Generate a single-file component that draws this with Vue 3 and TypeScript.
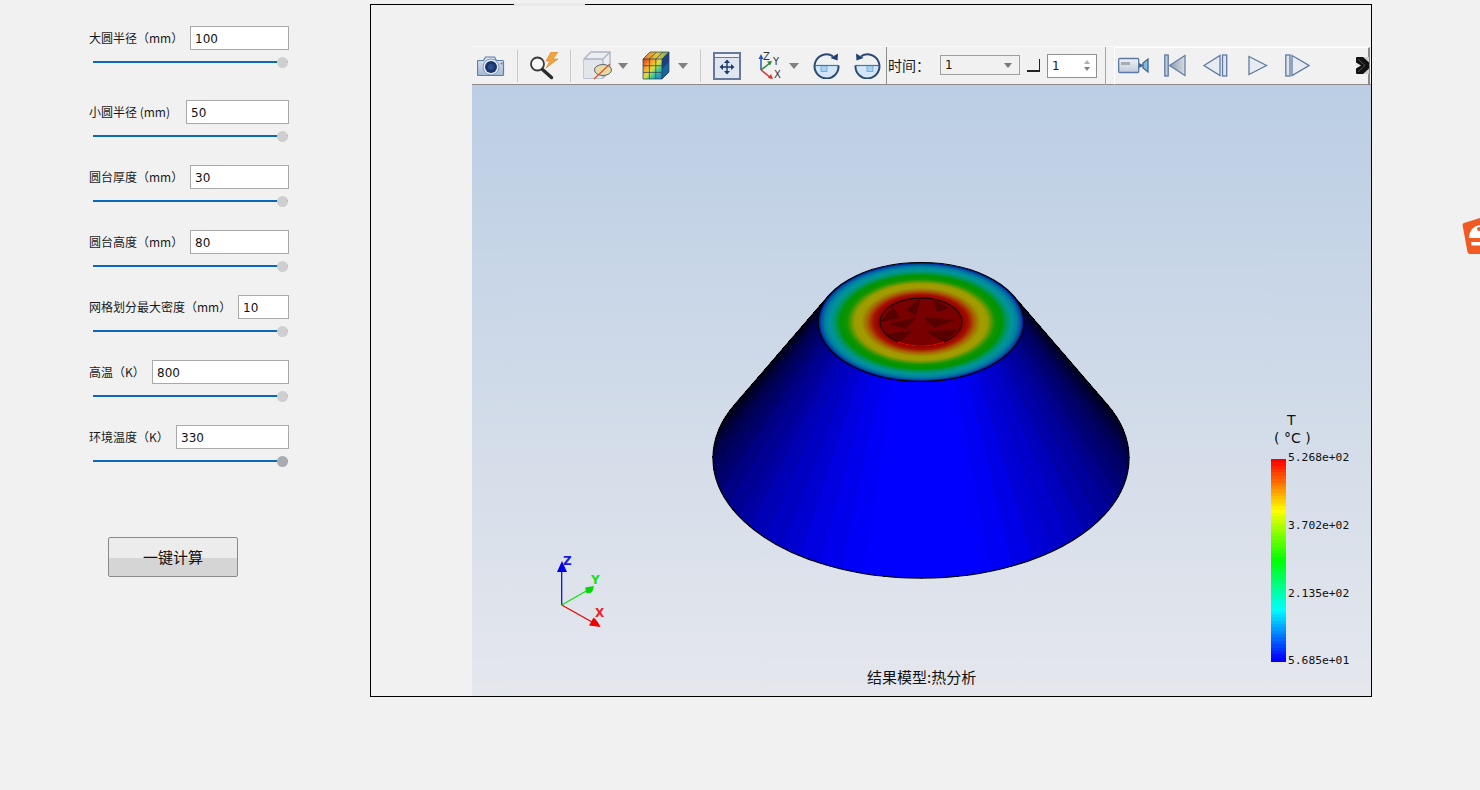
<script setup lang="ts">
import { reactive } from 'vue'

interface Param {
  label: string
  value: string
  inputWidth: number
}

const params = reactive<Param[]>([
  { label: '大圆半径（mm）', value: '100', inputWidth: 99 },
  { label: '小圆半径 (mm)', value: '50', inputWidth: 103 },
  { label: '圆台厚度（mm）', value: '30', inputWidth: 99 },
  { label: '圆台高度（mm）', value: '80', inputWidth: 99 },
  { label: '网格划分最大密度（mm）', value: '10', inputWidth: 51 },
  { label: '高温（K）', value: '800', inputWidth: 137 },
  { label: '环境温度（K）', value: '330', inputWidth: 113 },
])

// cone side, split in facets and shaded by angle from the viewer
const facetJitter = [0, -5, 3, -2, 4, -4]
const facets: { points: string; fill: string }[] = []
const facetCount = 72
const startDeg = -26.5
const endDeg = 206.5
for (let i = 0; i < facetCount; i++) {
  const a0 = ((startDeg + ((endDeg - startDeg) * i) / facetCount) * Math.PI) / 180
  const a1 = ((startDeg + ((endDeg - startDeg) * (i + 1)) / facetCount) * Math.PI) / 180
  const mid = startDeg + ((endDeg - startDeg) * (i + 0.5)) / facetCount
  const u = Math.abs(mid - 90) / 116.5
  const b = Math.max(0.1, Math.min(1, 1.08 * (1 - Math.pow(u, 1.3))))
  const blue = Math.max(0, Math.min(255, Math.round(b * 255 + facetJitter[i % 6] * (u > 0.15 ? 1 : 0))))
  const pt = (rx: number, ry: number, cy: number, a: number) =>
    `${(921 + rx * Math.cos(a)).toFixed(1)},${(cy + ry * Math.sin(a)).toFixed(1)}`
  facets.push({
    points: [pt(103, 59.5, 322, a0), pt(103, 59.5, 322, a1), pt(208, 120, 458, a1), pt(208, 120, 458, a0)].join(' '),
    fill: `rgb(0,0,${blue})`,
  })
}

function jet(t: number): string {
  const stops = [
    [0, 0, 255],
    [0, 255, 255],
    [0, 255, 0],
    [255, 255, 0],
    [255, 0, 0],
  ]
  const p = Math.min(3.999, t * 4)
  const k = Math.floor(p)
  const f = p - k
  const c = stops[k].map((v, n) => Math.round(v + (stops[k + 1][n] - v) * f))
  return `rgb(${c.join(',')})`
}

const bandCount = 60
const bands = Array.from({ length: bandCount }, (_, i) => ({
  y: 459 + (202 * i) / bandCount,
  h: 202 / bandCount + 0.5,
  fill: jet(1 - i / (bandCount - 1)),
}))

const legend = [
  { y: 461, text: '5.268e+02' },
  { y: 529, text: '3.702e+02' },
  { y: 597, text: '2.135e+02' },
  { y: 664, text: '5.685e+01' },
]

const holeDark = [
  '880,322 893,307 900,318',
  '906,310 921,298 916,315',
  '933,300 950,308 937,312',
  '888,324 917,317 906,329',
  '923,317 955,320 934,328',
  '884,334 913,330 900,342',
  '926,331 958,330 943,342',
]
</script>

<template>
  <div class="page">
    <aside class="panel">
      <div v-for="(p, i) in params" :key="p.label" class="param">
        <div class="field">
          <label class="label">{{ p.label }}</label>
          <input v-model="p.value" class="num" type="text" :style="{ width: p.inputWidth + 'px' }" />
        </div>
        <input class="slider" :class="{ active: i === params.length - 1 }" type="range" min="0" max="100" value="100" />
      </div>
      <button class="run" type="button">一键计算</button>
    </aside>

    <main class="frame">
      <div class="tab"></div>
      <div class="toolbar">
        <svg class="t-camera" width="28" height="22" viewBox="0 0 28 22">
          <defs>
            <linearGradient id="camBody" x1="0" y1="0" x2="0" y2="1">
              <stop offset="0" stop-color="#dfe7f2" />
              <stop offset="1" stop-color="#a3b9d8" />
            </linearGradient>
          </defs>
          <path d="M1.500 5.500h5l2-3.500h9l2 3.500h6a1 1 0 0 1 1 1v13a1 1 0 0 1-1 1h-24a1 1 0 0 1-1-1v-13a1 1 0 0 1 1-1z" fill="url(#camBody)" stroke="#5f7da5" stroke-width="1.200" />
          <circle cx="14" cy="12" r="8" fill="#e6ecf5" stroke="#7d97b9" />
          <circle cx="14" cy="12" r="6" fill="#1a3668" />
          <circle cx="14" cy="12" r="3" fill="#2a4f8f" />
          <circle cx="24.500" cy="8.500" r="1" fill="#5b7aa3" />
        </svg>
        <i class="sep s-a"></i>
        <svg class="t-search" width="29" height="28" viewBox="0 0 29 28">
          <polygon points="21,0 16,9 20,9 16,16 28,7 23,7 28,0" fill="#f0a43a" stroke="#d9822b" stroke-width=".6" />
          <circle cx="7.500" cy="12" r="6.500" fill="#f4f6f8" stroke="#3a3a3a" stroke-width="1.800" />
          <path d="M12.500 17.500l9 8" stroke="#2c2c2c" stroke-width="3.400" stroke-linecap="round" />
        </svg>
        <i class="sep s-b"></i>
        <svg class="t-cube" width="29" height="29" viewBox="0 0 29 29">
          <path d="M1 8l7-7h19v19l-7 7H1z" fill="#eceef2" stroke="#aab4c2" stroke-width="1.300" />
          <path d="M1 8h19v19H1z" fill="#e2e5ea" />
          <path d="M1 8h19v19M20 8l7-7" fill="none" stroke="#aab4c2" stroke-width="1.300" />
          <ellipse cx="20" cy="19" rx="8.500" ry="5.500" fill="#ead9a2" stroke="#5d6675" />
          <path d="M11 28L27 13" stroke="#d2582c" stroke-width="1.300" />
        </svg>
        <i class="caret c-a"></i>
        <svg class="t-grid" width="28" height="29" viewBox="0 0 28 29">
          <defs>
            <linearGradient id="rainbow" x1="0" y1="0" x2="1" y2="1">
              <stop offset="0" stop-color="#e02a20" />
              <stop offset=".3" stop-color="#f4a62a" />
              <stop offset=".5" stop-color="#dbe040" />
              <stop offset=".7" stop-color="#36c59a" />
              <stop offset="1" stop-color="#1f6fe0" />
            </linearGradient>
            <linearGradient id="rainbowTop" x1="0" y1="0" x2="1" y2="0">
              <stop offset="0" stop-color="#e8762c" />
              <stop offset=".55" stop-color="#e0c83a" />
              <stop offset="1" stop-color="#5fae58" />
            </linearGradient>
          </defs>
          <polygon points="1,8 8,1 27,1 20,8" fill="url(#rainbowTop)" />
          <polygon points="20,8 27,1 27,21 20,28" fill="#1d3f86" />
          <polygon points="20,18 27,11 27,21 20,28" fill="#17689a" />
          <rect x="1" y="8" width="19" height="20" fill="url(#rainbow)" />
          <path d="M1 8h19v20H1zM7.400 8v20M13.800 8v20M1 14.700h19M1 21.400h19M20 8l7-7M1 8l7-7h19v20l-7 7M7.400 8l7-7M13.800 8l7-7" fill="none" stroke="#2a3650" stroke-width=".7" />
        </svg>
        <i class="caret c-b"></i>
        <i class="sep s-c"></i>
        <svg class="t-fit" width="28" height="28" viewBox="0 0 28 28">
          <rect x="1" y="1" width="26" height="26" fill="#dfe6f0" stroke="#66799c" stroke-width="2" />
          <rect x="2" y="2" width="24" height="3" fill="#eef2f7" />
          <path d="M2 5.500h24" stroke="#66799c" />
          <path d="M14 9.500v11M8.500 15h11" stroke="#1e3a66" stroke-width="1.400" />
          <path d="M14 7.500l-3 3.500h6zM14 22.500l-3-3.500h6zM6.500 15l3.500-3v6zM21.500 15l-3.500-3v6z" fill="#1e3a66" />
        </svg>
        <svg class="t-axes" width="24" height="29" viewBox="0 0 24 29">
          <path d="M3 19V6" stroke="#2a56b0" stroke-width="1.500" />
          <path d="M3 19l9-7" stroke="#2b8a3e" stroke-width="1.500" />
          <path d="M3 19l10 8" stroke="#d8332a" stroke-width="1.500" />
          <path d="M3 3L.5 8h5z" fill="#2a56b0" />
          <path d="M14 10l-5 .5 3 4z" fill="#2b8a3e" />
          <path d="M15 28l-5-1 3-4z" fill="#d8332a" />
          <text class="axis-tag" x="5" y="9">Z</text>
          <text class="axis-tag" x="15" y="14">Y</text>
          <text class="axis-tag" x="16" y="27">X</text>
        </svg>
        <i class="caret c-c"></i>
        <svg class="t-rot1" width="27" height="27" viewBox="0 0 27 27">
          <path d="M1.500 13.500a12 12 0 0 0 24 0z" fill="#d3e6f6" />
          <rect x="8" y="13.500" width="6" height="6" fill="#a8d0f0" stroke="#5d9ad0" stroke-width=".7" />
          <path d="M1.500 13.500h24" stroke="#2a7fc4" stroke-width="1.200" />
          <path d="M20 4.300A12 12 0 1 0 25.500 13.500" fill="none" stroke="#2c4a72" stroke-width="2" />
          <path d="M25 1.500l-.5 7-7-2.500z" fill="#1f3f70" />
        </svg>
        <svg class="t-rot2" width="27" height="27" viewBox="0 0 27 27">
          <g transform="translate(27 0) scale(-1 1)">
            <path d="M1.500 13.500a12 12 0 0 0 24 0z" fill="#d3e6f6" />
            <rect x="8" y="13.500" width="6" height="6" fill="#a8d0f0" stroke="#5d9ad0" stroke-width=".7" />
            <path d="M1.500 13.500h24" stroke="#2a7fc4" stroke-width="1.200" />
            <path d="M20 4.300A12 12 0 1 0 25.500 13.500" fill="none" stroke="#2c4a72" stroke-width="2" />
            <path d="M25 1.500l-.5 7-7-2.500z" fill="#1f3f70" />
          </g>
        </svg>
        <i class="sep dark s-d"></i>
        <span class="time-label">时间：</span>
        <div class="combo"><span>1</span><i class="mini-caret"></i></div>
        <i class="corner"></i>
        <div class="spin">
          <span>1</span>
          <div class="spin-arrows"><i class="up"></i><i class="down"></i></div>
        </div>
        <i class="sep s-e"></i>
        <div class="player">
          <svg class="p-video" width="31" height="17" viewBox="0 0 31 17">
            <defs>
              <linearGradient id="vidBody" x1="0" y1="0" x2="0" y2="1">
                <stop offset="0" stop-color="#f0f3f7" />
                <stop offset="1" stop-color="#bfcbdb" />
              </linearGradient>
            </defs>
            <rect x=".7" y="1.500" width="20" height="14" rx="1" fill="url(#vidBody)" stroke="#5a7aa5" stroke-width="1.300" />
            <rect x="3" y="5" width="9" height="3" fill="#a8adb5" />
            <path d="M21 6l4 2V9l-4 2z" fill="#3f6795" />
            <path d="M30 2v13l-5-4V6z" fill="#7dbce0" stroke="#3f6795" stroke-width="1.300" />
          </svg>
          <svg class="p-first" width="22" height="23" viewBox="0 0 22 23">
            <defs>
              <linearGradient id="firstFill" x1="0" y1="0" x2="1" y2="0">
                <stop offset="0" stop-color="#8e9aab" />
                <stop offset="1" stop-color="#d6dce4" />
              </linearGradient>
            </defs>
            <rect x=".8" y="1" width="3.400" height="21" fill="#c0cee0" stroke="#5e7aa2" stroke-width="1.300" />
            <path d="M5.500 11.500L21 1.500v20z" fill="url(#firstFill)" stroke="#6a82a6" stroke-width="1.300" />
          </svg>
          <svg class="p-prev" width="25" height="23" viewBox="0 0 25 23">
            <path d="M1 11.500L17 1.500v20z" fill="#e8ecf2" stroke="#5e7aa2" stroke-width="1.300" />
            <rect x="19.500" y="1" width="4.200" height="21" fill="#dfe4ec" stroke="#5e7aa2" stroke-width="1.300" />
          </svg>
          <svg class="p-play" width="20" height="21" viewBox="0 0 20 21">
            <path d="M1 1.500l17.500 9-17.500 9z" fill="#e8ecf2" stroke="#5e7aa2" stroke-width="1.300" />
          </svg>
          <svg class="p-next" width="25" height="23" viewBox="0 0 25 23">
            <rect x=".8" y="1" width="4.200" height="21" fill="#dfe4ec" stroke="#5e7aa2" stroke-width="1.300" />
            <path d="M7 1.500l17 10-17 10z" fill="#e8ecf2" stroke="#5e7aa2" stroke-width="1.300" />
          </svg>
          <svg class="p-more" width="13" height="17" viewBox="0 0 13 17">
            <rect width="13" height="17" fill="#111" rx="1" />
            <path d="M0 5.500l5 3-5 3z" fill="#e8e8e8" />
            <path d="M7 0h6v5.500zM7 17h6v-5.500z" fill="#d0d0d0" />
            <path d="M2 2l7 6.500-7 6.500" fill="none" stroke="#555" />
          </svg>
        </div>
      </div>

      <svg class="scene" viewBox="472 85 899 611" width="899" height="611">
        <defs>
          <linearGradient id="sky" x1="0" y1="0" x2="0" y2="1">
            <stop offset="0" stop-color="#bbcee4" />
            <stop offset="1" stop-color="#e5e7ed" />
          </linearGradient>
          <radialGradient id="cap">
            <stop offset=".4" stop-color="#8c0000" />
            <stop offset=".46" stop-color="#a41000" />
            <stop offset=".52" stop-color="#a86000" />
            <stop offset=".58" stop-color="#a09c00" />
            <stop offset=".64" stop-color="#a09c00" />
            <stop offset=".72" stop-color="#109400" />
            <stop offset=".78" stop-color="#009400" />
            <stop offset=".83" stop-color="#009560" />
            <stop offset=".88" stop-color="#00959c" />
            <stop offset=".93" stop-color="#0080a0" />
            <stop offset=".97" stop-color="#0050a0" />
            <stop offset="1" stop-color="#000090" />
          </radialGradient>
          <clipPath id="holeClip">
            <ellipse cx="921" cy="322" rx="41" ry="24" />
          </clipPath>
        </defs>
        <rect x="472" y="85" width="899" height="611" fill="url(#sky)" />

        <g shape-rendering="crispEdges">
          <polygon
            v-for="(f, i) in facets"
            :key="i"
            :points="f.points"
            :fill="f.fill"
            :stroke="f.fill"
            stroke-width="1"
          />
        </g>
        <path
          d="M829 295.500L735 404.500A208 120 0 1 0 1107 404.500L1013 295.500"
          fill="none"
          stroke="#000"
          stroke-width="1.200"
        />
        <ellipse cx="921" cy="322" rx="103" ry="59.500" fill="url(#cap)" stroke="#000" stroke-width="1.200" />
        <ellipse cx="921" cy="322" rx="41" ry="24" fill="#780000" />
        <g clip-path="url(#holeClip)">
          <polygon v-for="(pts, i) in holeDark" :key="i" :points="pts" fill="#560000" />
        </g>
        <ellipse cx="921" cy="322" rx="41" ry="24" fill="none" stroke="#000" stroke-width="1" />
        <path d="M898 342Q921 350 944 342" fill="none" stroke="#f00" stroke-width="1.200" />

        <g class="triad">
          <path d="M561.700 605V570" stroke="#0000e6" stroke-width="1.200" />
          <path d="M561.700 605L588 590" stroke="#00e600" stroke-width="1.200" />
          <path d="M561.700 605L592 622" stroke="#e60000" stroke-width="1.200" />
          <path d="M562 561l-5 11h10z" fill="#0000e6" />
          <path d="M594 586l-9 1.500 1.500 5.500q4 1 6-2z" fill="#00d800" />
          <path d="M600.500 627L589 625.500l4.500-8q4 3 7 9.500z" fill="#f00000" />
          <text x="563" y="565" fill="#1a1ae0" class="axis-big">Z</text>
          <text x="591" y="584" fill="#18e018" class="axis-big">Y</text>
          <text x="595" y="617" fill="#f02020" class="axis-big">X</text>
        </g>

        <g shape-rendering="crispEdges">
          <rect v-for="(b, i) in bands" :key="i" x="1271" :y="b.y" width="15" :height="b.h" :fill="b.fill" />
        </g>
        <text x="1287" y="425" class="unit">T</text>
        <text x="1274" y="443" class="unit">( °C )</text>
        <text v-for="l in legend" :key="l.text" x="1288" :y="l.y" class="tick">{{ l.text }}</text>
        <text x="867" y="683" class="caption">结果模型:热分析</text>
      </svg>
    </main>

    <svg class="brand" width="18" height="36" viewBox="0 0 18 36">
      <path d="M2 5L18 0V36H8Q6 36 5.500 34L.5 7Q.5 5.500 2 5z" fill="#f15a22" />
      <path d="M7 20Q7 9 18 7V20z" fill="#fff" />
      <circle cx="17" cy="11" r="2" fill="#f15a22" />
      <path d="M9 24H18V27.500H9.600z" fill="#fff" />
    </svg>
  </div>
</template>

<style>
html,
body {
  margin: 0;
  background: #f1f1f1;
}
</style>

<style scoped>
.page {
  position: relative;
  display: flex;
  align-items: flex-start;
  height: 790px;
  overflow: hidden;
  background: #f1f1f1;
  color: #1a1a1a;
  font-family: "Noto Sans CJK SC", "Liberation Sans", sans-serif;
}

.panel {
  box-sizing: border-box;
  width: 370px;
  padding: 26px 0 0 88px;
}

.param {
  width: 201px;
  margin-bottom: 24px;
}

.param:first-child {
  margin-bottom: 33px;
}

.field {
  display: flex;
  justify-content: space-between;
  align-items: center;
  height: 24px;
}

.label {
  padding-left: 1px;
  font-size: 12px;
  line-height: 24px;
  white-space: nowrap;
}

.num {
  box-sizing: border-box;
  height: 24px;
  padding: 2px 4px 0;
  border: 1px solid #a9a9a9;
  border-radius: 0;
  outline: none;
  background: #fff;
  color: #111;
  font-family: "DejaVu Sans", sans-serif;
  font-size: 12px;
}

.slider {
  display: block;
  width: 194.500px;
  height: 11px;
  margin: 6px 0 0 5px;
  padding: 0;
  appearance: none;
  -webkit-appearance: none;
  background: transparent;
}

.slider::-webkit-slider-runnable-track {
  height: 2px;
  background: #0a69bb;
}

.slider::-webkit-slider-thumb {
  -webkit-appearance: none;
  width: 11px;
  height: 11px;
  margin-top: -4px;
  border-radius: 50%;
  background: #cfcfcf;
}

.slider.active::-webkit-slider-thumb {
  background: #a9adb2;
}

.run {
  display: block;
  width: 130px;
  height: 40px;
  margin: 71px 0 0 20px;
  padding: 0 0 2px;
  border: 1px solid #8a8a8a;
  border-radius: 2px;
  background: linear-gradient(#ececec 0, #ececec 52%, #d5d5d5 52%, #d5d5d5 100%);
  color: #111;
  font-family: inherit;
  font-size: 15px;
}

.frame {
  position: relative;
  box-sizing: border-box;
  width: 1002px;
  height: 693px;
  margin-top: 4px;
  padding: 41px 0 0 101px;
  border: 1px solid #000;
}

.tab {
  position: absolute;
  top: -2px;
  left: 143px;
  width: 71px;
  height: 3px;
  background: #e9e9e9;
}

.toolbar {
  box-sizing: border-box;
  display: flex;
  align-items: center;
  height: 39px;
  padding-left: 5px;
  border-top: 1px solid #fafafa;
  border-bottom: 1px solid #8c8c8c;
  background: #f1f1f1;
}

.toolbar svg {
  flex: none;
  display: block;
}

.sep {
  flex: none;
  width: 1px;
  height: 32px;
  background: #c8c8c8;
}

.sep.dark {
  height: 38px;
  background: #8e8e8e;
}

.s-a { margin-left: 12px; }
.s-b { margin-left: 11px; }
.s-c { margin-left: 12px; }
.s-d { margin-left: 5px; }
.s-e { margin-left: 8px; height: 38px; background: #a5a5a5; }

.t-search { margin-left: 12px; }
.t-cube { margin-left: 12px; }
.t-grid { margin-left: 14px; }
.t-fit { margin-left: 12px; }
.t-axes { margin-left: 17px; }
.t-rot1 { margin-left: 14px; }
.t-rot2 { margin-left: 14px; }

.caret {
  flex: none;
  width: 0;
  height: 0;
  border-top: 6px solid #808080;
  border-right: 5.500px solid transparent;
  border-left: 5.500px solid transparent;
}

.c-a { margin-left: 6px; }
.c-b { margin-left: 8px; }
.c-c { margin-left: 7px; }

.axis-tag {
  fill: #333;
  font-family: "DejaVu Sans", sans-serif;
  font-size: 10px;
}

.time-label {
  flex: none;
  width: 52px;
  margin-left: 1px;
  padding-bottom: 2px;
  font-size: 14px;
  white-space: nowrap;
}

.combo {
  box-sizing: border-box;
  display: flex;
  justify-content: space-between;
  align-items: center;
  flex: none;
  width: 80px;
  height: 20px;
  margin-bottom: 1px;
  padding: 0 7px 0 4px;
  border: 1px solid #a0a0a0;
  font-family: "DejaVu Sans", sans-serif;
  font-size: 12px;
}

.mini-caret {
  width: 0;
  height: 0;
  border-top: 5px solid #7a7a7a;
  border-right: 4px solid transparent;
  border-left: 4px solid transparent;
}

.corner {
  flex: none;
  box-sizing: border-box;
  width: 13px;
  height: 13px;
  margin-left: 7px;
  border-right: 1px solid #222;
  border-bottom: 2px solid #222;
}

.spin {
  box-sizing: border-box;
  display: flex;
  justify-content: space-between;
  align-items: center;
  flex: none;
  width: 50px;
  height: 24px;
  margin-left: 7px;
  padding: 0 6px 0 4px;
  border: 1px solid #8f8f8f;
  background: #fff;
  font-family: "DejaVu Sans", sans-serif;
  font-size: 12px;
}

.spin-arrows {
  display: flex;
  flex-direction: column;
  gap: 3px;
}

.spin-arrows i {
  width: 0;
  height: 0;
  border-right: 3px solid transparent;
  border-left: 3px solid transparent;
}

.spin-arrows .up {
  border-bottom: 4px solid #b0b0b0;
}

.spin-arrows .down {
  border-top: 4px solid #808080;
}

.player {
  box-sizing: border-box;
  display: flex;
  align-items: center;
  flex: none;
  width: 256px;
  height: 38px;
  margin-left: 8px;
  padding-left: 3px;
  border-top: 1px solid #fff;
  border-right: 2px solid #8a8a8a;
  border-bottom: 1px solid #8a8a8a;
  border-left: 1px solid #fff;
}

.p-first { margin-left: 15px; }
.p-prev { margin-left: 17px; }
.p-play { margin-left: 20px; }
.p-next { margin-left: 17px; }
.p-more { margin-left: 46px; }

.scene {
  display: block;
}

.axis-big {
  font-family: "DejaVu Sans", sans-serif;
  font-size: 12px;
  font-weight: 700;
}

.unit {
  fill: #111;
  font-family: "DejaVu Sans", sans-serif;
  font-size: 14px;
}

.tick {
  fill: #111;
  font-family: "DejaVu Sans Mono", monospace;
  font-size: 11.300px;
}

.caption {
  fill: #111;
  font-family: "Noto Sans CJK SC", sans-serif;
  font-size: 15px;
}

.brand {
  position: absolute;
  top: 218px;
  right: 0;
}
</style>
